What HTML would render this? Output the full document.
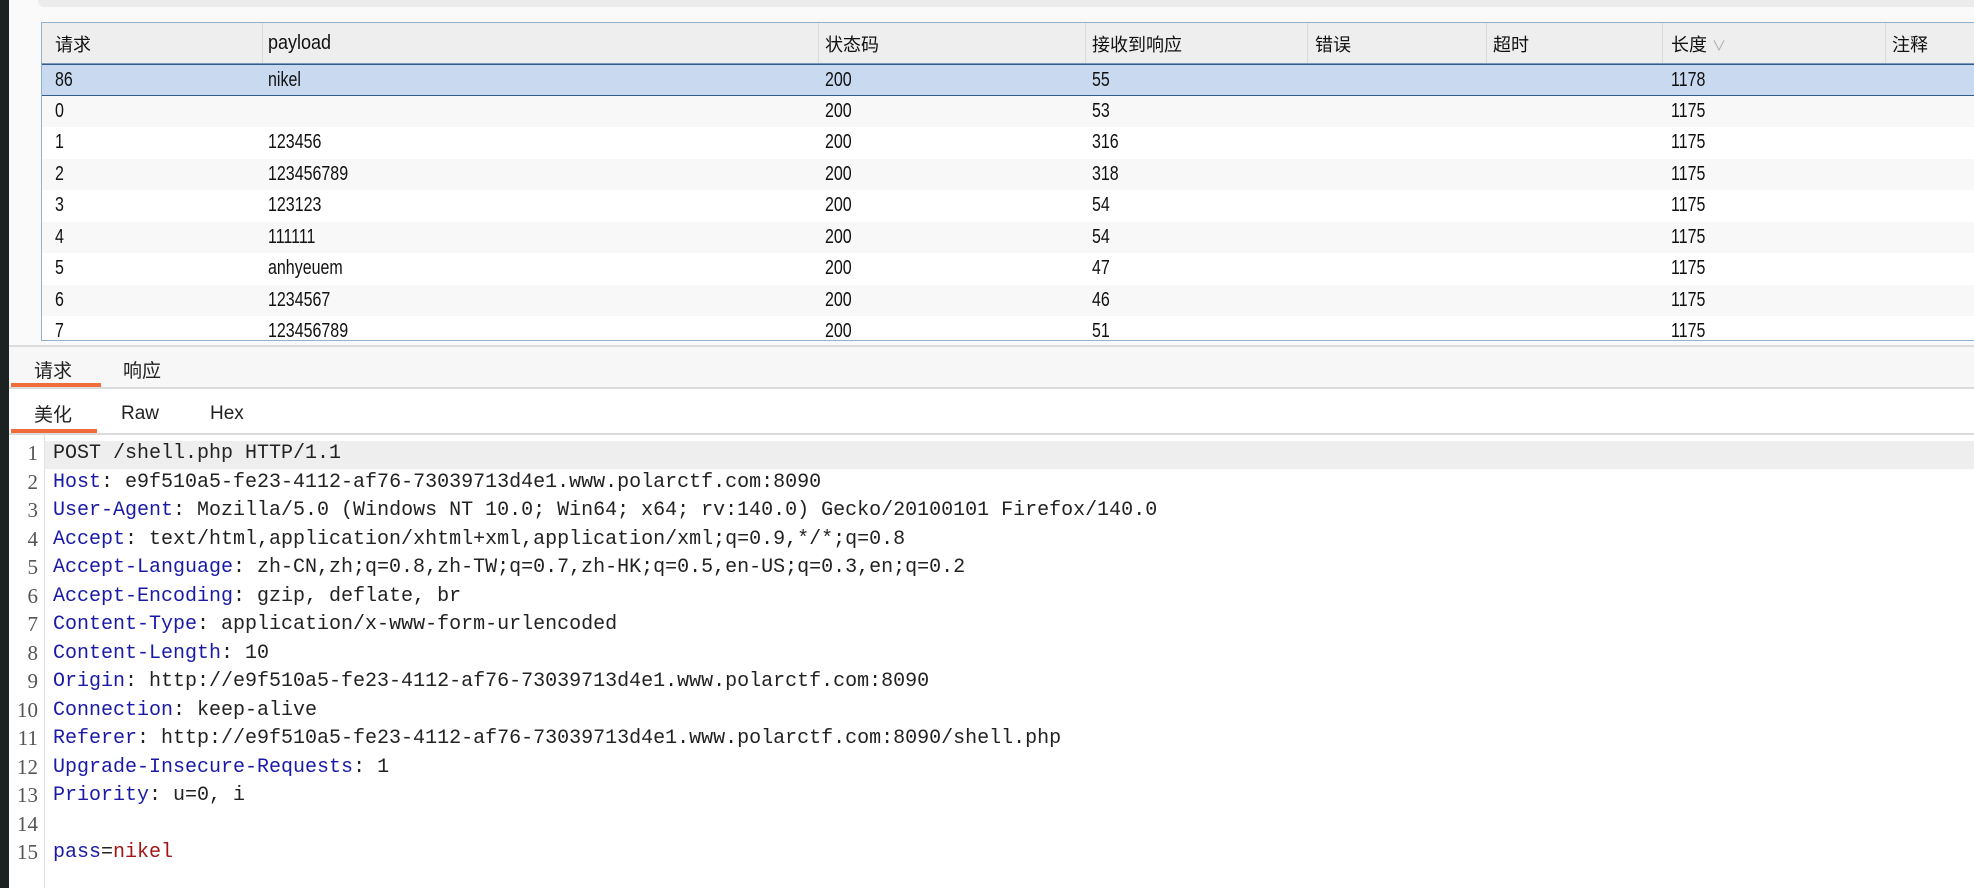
<!DOCTYPE html>
<html><head><meta charset="utf-8"><style>
*{margin:0;padding:0;box-sizing:border-box}
body{width:1974px;height:888px;overflow:hidden;background:#fafafa;font-family:"Liberation Sans","Noto Sans CJK SC",sans-serif;position:relative}
.dark{position:absolute;left:0;top:0;width:9px;height:888px;background:#1c2222}
.topbar{position:absolute;left:38px;top:0;right:0;height:7px;background:#ececec;border-radius:0 0 0 6px}
.tbl{position:absolute;left:41px;top:22px;right:0;height:319px;border:1px solid #94b0cf;border-right:none;background:#fff;overflow:hidden}
.row{position:absolute;left:0;right:0;height:31.5px;font-size:20px;color:#111}
.row span{position:absolute;top:4px;white-space:nowrap;transform:scaleX(0.8);transform-origin:0 0}
.hdr{top:0;height:41px;background:#eeeeee;border-bottom:1px solid #7a98b8}
.hdr span{top:8px;font-size:18px;transform:none}
.hdr span.p{transform:scaleX(0.9);font-size:20px;top:9px}
.hdr i{position:absolute;top:0;height:40px;width:1px;background:#dadada}
.sel{background:#c9d9ef;border-top:1px solid #2f5d8a;border-bottom:1px solid #2f5d8a}
.alt{background:#f8f8f8}
.bar1{position:absolute;left:9px;top:345px;right:0;height:44px;background:#f7f7f7;border-top:2px solid #dcdcdc;border-bottom:2px solid #dcdcdc}
.bar2{position:absolute;left:9px;top:389px;right:0;height:46px;background:#fff;border-bottom:2px solid #dcdcdc}
.tab{position:absolute;font-size:19px;color:#222}
.ul{position:absolute;height:4px;background:#f26b3a}
.code{position:absolute;left:9px;top:435px;right:0;bottom:0;background:#fff}
.gut{position:absolute;left:35px;top:0;bottom:0;width:1px;background:#e2e2e2}
.ln{position:absolute;left:0;width:29px;text-align:right;font-family:"Liberation Serif","Noto Serif CJK SC",serif;font-size:21px;color:#555}
.cl{position:absolute;left:44px;font-family:"Liberation Mono",monospace;font-size:20px;color:#222;white-space:pre}
.k{color:#1a1aa6}
.r{color:#a31515}
.hl{position:absolute;left:36px;right:0;top:6px;height:28px;background:#eeeeee}
</style></head><body>
<div class="dark"></div>
<div class="topbar"></div>
<div class="tbl">
 <div class="row hdr"><span style="left:13px">请求</span><i style="left:220px"></i><span class="p" style="left:226px">payload</span><i style="left:776px"></i><span style="left:783px">状态码</span><i style="left:1043px"></i><span style="left:1050px">接收到响应</span><i style="left:1265px"></i><span style="left:1273px">错误</span><i style="left:1444px"></i><span style="left:1451px">超时</span><i style="left:1620px"></i><span style="left:1629px">长度 <small style="color:#aaa;font-size:14px">∨</small></span><i style="left:1843px"></i><span style="left:1850px">注释</span></div>
 <div class="row sel" style="top:41px"><span style="left:13px">86</span><span style="left:226px">nikel</span><span style="left:783px">200</span><span style="left:1050px">55</span><span style="left:1629px">1178</span></div>
 <div class="row alt" style="top:72.5px"><span style="left:13px">0</span><span style="left:783px">200</span><span style="left:1050px">53</span><span style="left:1629px">1175</span></div>
 <div class="row" style="top:104px"><span style="left:13px">1</span><span style="left:226px">123456</span><span style="left:783px">200</span><span style="left:1050px">316</span><span style="left:1629px">1175</span></div>
 <div class="row alt" style="top:135.5px"><span style="left:13px">2</span><span style="left:226px">123456789</span><span style="left:783px">200</span><span style="left:1050px">318</span><span style="left:1629px">1175</span></div>
 <div class="row" style="top:167px"><span style="left:13px">3</span><span style="left:226px">123123</span><span style="left:783px">200</span><span style="left:1050px">54</span><span style="left:1629px">1175</span></div>
 <div class="row alt" style="top:198.5px"><span style="left:13px">4</span><span style="left:226px">111111</span><span style="left:783px">200</span><span style="left:1050px">54</span><span style="left:1629px">1175</span></div>
 <div class="row" style="top:230px"><span style="left:13px">5</span><span style="left:226px">anhyeuem</span><span style="left:783px">200</span><span style="left:1050px">47</span><span style="left:1629px">1175</span></div>
 <div class="row alt" style="top:261.5px"><span style="left:13px">6</span><span style="left:226px">1234567</span><span style="left:783px">200</span><span style="left:1050px">46</span><span style="left:1629px">1175</span></div>
 <div class="row" style="top:293px"><span style="left:13px">7</span><span style="left:226px">123456789</span><span style="left:783px">200</span><span style="left:1050px">51</span><span style="left:1629px">1175</span></div>
</div>
<div class="bar1"><span class="tab" style="left:25px;top:9px">请求</span><span class="tab" style="left:114px;top:9px">响应</span><div class="ul" style="left:2px;top:36px;width:90px"></div></div>
<div class="bar2"><span class="tab" style="left:25px;top:11px">美化</span><span class="tab" style="left:112px;top:14px">Raw</span><span class="tab" style="left:201px;top:14px">Hex</span><div class="ul" style="left:2px;top:40px;width:86px"></div></div>
<div class="code">
<div class="gut"></div><div class="hl"></div>
<div class="ln" style="top:6px">1</div><div class="cl" style="top:7px">POST /shell.php HTTP/1.1</div>
<div class="ln" style="top:34.5px">2</div><div class="cl" style="top:35.5px"><span class="k">Host</span>: e9f510a5-fe23-4112-af76-73039713d4e1.www.polarctf.com:8090</div>
<div class="ln" style="top:63px">3</div><div class="cl" style="top:64px"><span class="k">User-Agent</span>: Mozilla/5.0 (Windows NT 10.0; Win64; x64; rv:140.0) Gecko/20100101 Firefox/140.0</div>
<div class="ln" style="top:91.5px">4</div><div class="cl" style="top:92.5px"><span class="k">Accept</span>: text/html,application/xhtml+xml,application/xml;q=0.9,*/*;q=0.8</div>
<div class="ln" style="top:120px">5</div><div class="cl" style="top:121px"><span class="k">Accept-Language</span>: zh-CN,zh;q=0.8,zh-TW;q=0.7,zh-HK;q=0.5,en-US;q=0.3,en;q=0.2</div>
<div class="ln" style="top:148.5px">6</div><div class="cl" style="top:149.5px"><span class="k">Accept-Encoding</span>: gzip, deflate, br</div>
<div class="ln" style="top:177px">7</div><div class="cl" style="top:178px"><span class="k">Content-Type</span>: application/x-www-form-urlencoded</div>
<div class="ln" style="top:205.5px">8</div><div class="cl" style="top:206.5px"><span class="k">Content-Length</span>: 10</div>
<div class="ln" style="top:234px">9</div><div class="cl" style="top:235px"><span class="k">Origin</span>: http://e9f510a5-fe23-4112-af76-73039713d4e1.www.polarctf.com:8090</div>
<div class="ln" style="top:262.5px">10</div><div class="cl" style="top:263.5px"><span class="k">Connection</span>: keep-alive</div>
<div class="ln" style="top:291px">11</div><div class="cl" style="top:292px"><span class="k">Referer</span>: http://e9f510a5-fe23-4112-af76-73039713d4e1.www.polarctf.com:8090/shell.php</div>
<div class="ln" style="top:319.5px">12</div><div class="cl" style="top:320.5px"><span class="k">Upgrade-Insecure-Requests</span>: 1</div>
<div class="ln" style="top:348px">13</div><div class="cl" style="top:349px"><span class="k">Priority</span>: u=0, i</div>
<div class="ln" style="top:376.5px">14</div>
<div class="ln" style="top:405px">15</div><div class="cl" style="top:406px"><span class="k">pass</span>=<span class="r">nikel</span></div>
</div>
</body></html>
